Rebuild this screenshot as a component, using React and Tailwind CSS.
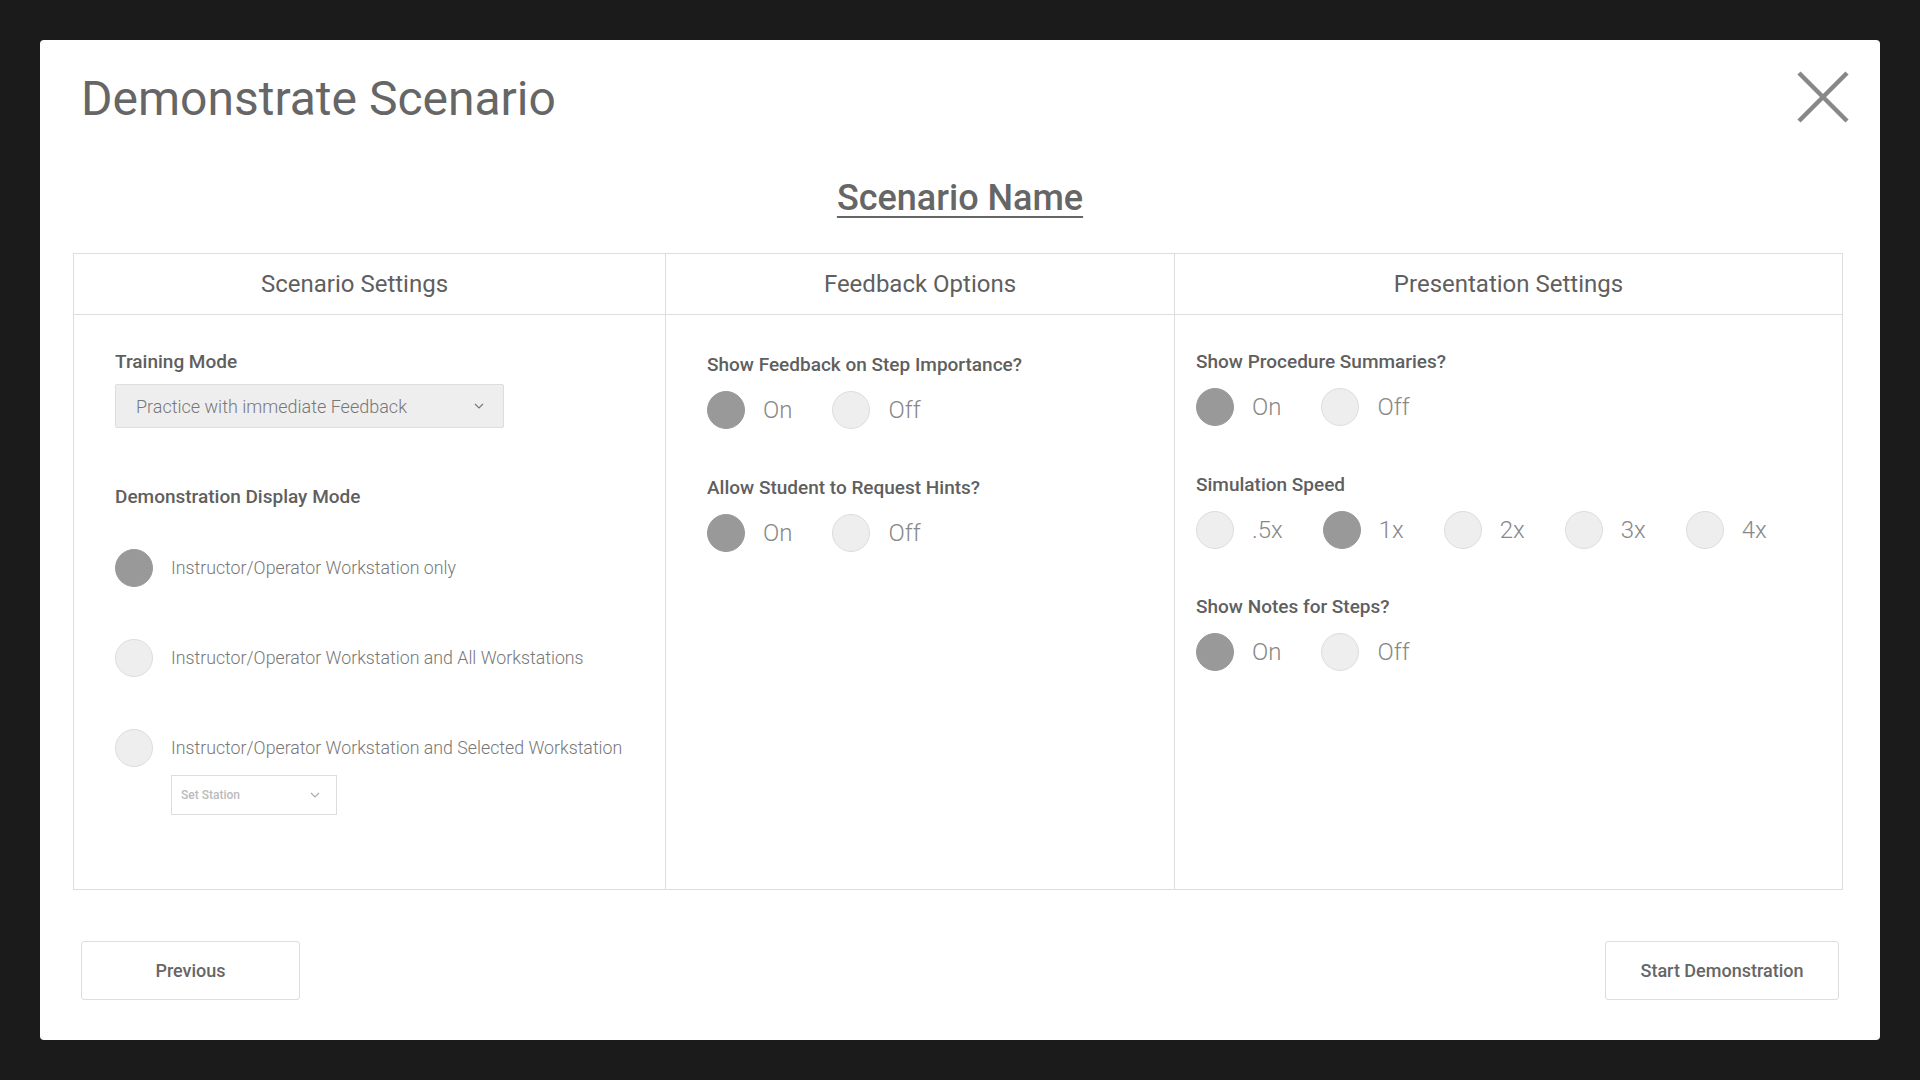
import React, { useState } from "react";

const font = { fontFamily: "Roboto, 'Noto Sans', sans-serif" };

function Chevron({ className }) {
  return (
    <svg width="10" height="6" viewBox="0 0 10 6" className={className}>
      <path d="M1 1l4 4 4-4" fill="none" stroke="currentColor" strokeWidth="1.2" />
    </svg>
  );
}

function Dot({ on }) {
  return (
    <span
      className={
        on
          ? "w-[38px] h-[38px] shrink-0 rounded-full bg-[#999] border border-[#999]"
          : "w-[38px] h-[38px] shrink-0 rounded-full bg-[#eee] border border-[#ddd]"
      }
    />
  );
}

function Choice({ options, value, onChange }) {
  return (
    <div className="flex items-center gap-[40px] mt-[14px]">
      {options.map((o) => (
        <button key={o} onClick={() => onChange(o)} className="flex items-center gap-[18px]">
          <Dot on={value === o} />
          <span className="text-[24px] font-light text-[#888] leading-none">{o}</span>
        </button>
      ))}
    </div>
  );
}

function Label({ children, className = "" }) {
  return <div className={"text-[19px] leading-[24px] font-medium text-[#5f5f5f] " + className}>{children}</div>;
}

export default function App() {
  const [display, setDisplay] = useState(0);
  const [stepFb, setStepFb] = useState("On");
  const [hints, setHints] = useState("On");
  const [summaries, setSummaries] = useState("On");
  const [speed, setSpeed] = useState("1x");
  const [notes, setNotes] = useState("On");

  const displayModes = [
    "Instructor/Operator Workstation only",
    "Instructor/Operator Workstation and All Workstations",
    "Instructor/Operator Workstation and Selected Workstation",
  ];

  return (
    <div className="w-[1920px] h-[1080px] bg-[#1b1b1b] p-[40px]" style={font}>
      <div className="h-[1000px] bg-white rounded-[4px] flex flex-col pt-[31px]">
        {/* title row */}
        <div className="flex items-start justify-between pl-[41px] pr-[31px]">
          <h1 className="mt-[4px] text-[48px] leading-none font-normal text-[#666]">Demonstrate Scenario</h1>
          <button className="w-[52px] h-[52px]">
            <svg width="52" height="52" viewBox="0 0 52 52">
              <path d="M2 2L50 50M50 2L2 50" stroke="#888" strokeWidth="4.5" />
            </svg>
          </button>
        </div>

        <div className="mt-[57px] text-center">
          <span className="text-[36px] leading-none font-medium text-[#666] underline decoration-2 underline-offset-[6px]">
            Scenario Name
          </span>
        </div>

        {/* settings table */}
        <div className="mt-[36px] ml-[33px] mr-[37px] h-[637px] border border-[#ddd] grid grid-cols-[591px_509px_1fr]">
          {/* Scenario Settings */}
          <div className="flex flex-col">
            <div className="h-[61px] border-b border-[#ddd] flex items-center justify-center pr-[30px] text-[24px] text-[#5f5f5f]">
              Scenario Settings
            </div>
            <div className="pl-[41px] pt-[35px]">
              <Label>Training Mode</Label>
              <div className="mt-[10px] w-[389px] h-[44px] bg-[#eee] border border-[#ddd] rounded-[2px] flex items-center justify-between pl-[20px] pr-[19px]">
                <span className="text-[18px] font-light text-[#777]">Practice with immediate Feedback</span>
                <Chevron className="text-[#777]" />
              </div>
              <Label className="mt-[57px]">Demonstration Display Mode</Label>
              <div className="mt-[40px] flex flex-col gap-[52px]">
                {displayModes.map((m, i) => (
                  <div key={m}>
                    <button onClick={() => setDisplay(i)} className="flex items-center gap-[18px]">
                      <Dot on={display === i} />
                      <span className="text-[17.75px] font-light text-[#777]">{m}</span>
                    </button>
                    {i === 2 && (
                      <div className="ml-[56px] mt-[8px] w-[166px] h-[40px] border border-[#ddd] flex items-center justify-between pl-[9px] pr-[16px]">
                        <span className="text-[12px] font-medium text-[#bbb]">Set Station</span>
                        <Chevron className="text-[#aaa]" />
                      </div>
                    )}
                  </div>
                ))}
              </div>
            </div>
          </div>

          {/* Feedback Options */}
          <div className="flex flex-col border-l border-[#ddd]">
            <div className="h-[61px] border-b border-[#ddd] flex items-center justify-center text-[24px] text-[#5f5f5f]">
              Feedback Options
            </div>
            <div className="pl-[41px] pt-[38px]">
              <Label>Show Feedback on Step Importance?</Label>
              <Choice options={["On", "Off"]} value={stepFb} onChange={setStepFb} />
              <Label className="mt-[47px]">Allow Student to Request Hints?</Label>
              <Choice options={["On", "Off"]} value={hints} onChange={setHints} />
            </div>
          </div>

          {/* Presentation Settings */}
          <div className="flex flex-col border-l border-[#ddd]">
            <div className="h-[61px] border-b border-[#ddd] flex items-center justify-center text-[24px] text-[#5f5f5f]">
              Presentation Settings
            </div>
            <div className="pl-[21px] pt-[35px]">
              <Label>Show Procedure Summaries?</Label>
              <Choice options={["On", "Off"]} value={summaries} onChange={setSummaries} />
              <Label className="mt-[47px]">Simulation Speed</Label>
              <Choice options={[".5x", "1x", "2x", "3x", "4x"]} value={speed} onChange={setSpeed} />
              <Label className="mt-[46px]">Show Notes for Steps?</Label>
              <Choice options={["On", "Off"]} value={notes} onChange={setNotes} />
            </div>
          </div>
        </div>

        {/* footer */}
        <div className="mt-[51px] px-[41px] flex justify-between">
          <button className="w-[219px] h-[59px] border border-[#ddd] rounded-[3px] text-[18px] font-medium text-[#666]">
            Previous
          </button>
          <button className="w-[234px] h-[59px] border border-[#ddd] rounded-[3px] text-[18px] font-medium text-[#666]">
            Start Demonstration
          </button>
        </div>
      </div>
    </div>
  );
}
